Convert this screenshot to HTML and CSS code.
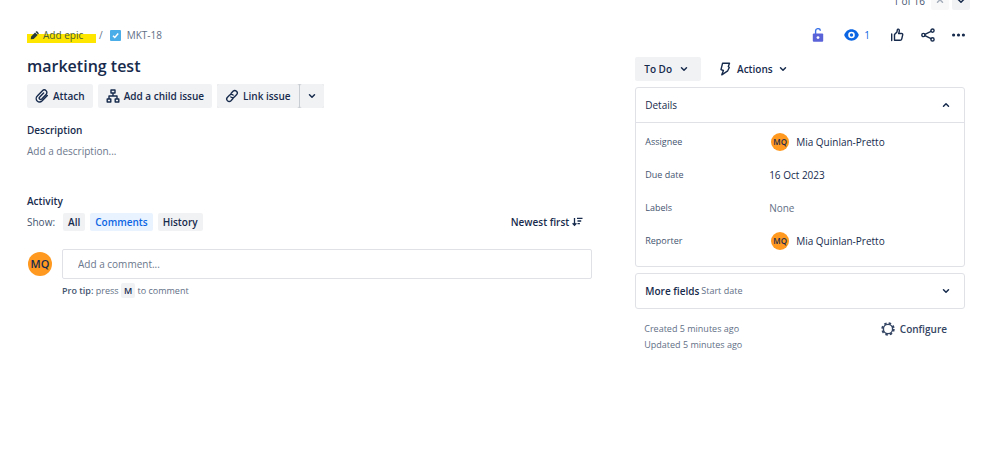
FILE: index.html
```html
<!DOCTYPE html>
<html lang="en">
<head>
    <meta charset="utf-8">
    <title>MKT-18 marketing test</title>
    <link rel="stylesheet" href="styles.css">
</head>
<body>

    <!-- Pager -->
    <nav class="pager" aria-label="Issues">
        <span class="pager-count">1 of 16</span>
        <button class="pager-btn" aria-label="Previous issue" disabled>
            <svg class="chevron" viewBox="0 0 8 8"><path d="M1.5 5.2 4 2.8l2.5 2.4"/></svg>
        </button>
        <button class="pager-btn" aria-label="Next issue">
            <svg class="chevron" viewBox="0 0 8 8"><path d="M1.5 2.8 4 5.2l2.5-2.4"/></svg>
        </button>
    </nav>

    <div class="issue">
        <!-- Left column -->
        <main class="main">
            <div class="breadcrumbs">
                <a href="#epic" class="add-epic">
                    <svg class="pencil" viewBox="0 0 10 10"><path d="M.800 9.300l.5-3.300L5.600 1.600 8.500 4.400 4.100 8.800z M6.200 1l.7-.6q.5-.4 1 0l1.700 1.700q.4.500 0 1l-.6.700z"/></svg>
                    Add epic
                </a>
                <span class="slash">/</span>
                <a href="#MKT-18" class="issue-key">
                    <svg class="task-icon" viewBox="0 0 11 11"><rect width="11" height="11" rx="1" fill="#4bade8"/><path d="M3 5.7l1.8 1.8L8.2 3.6" fill="none" stroke="#fff" stroke-width="1.5"/></svg>
                    MKT-18
                </a>
            </div>

            <h1>marketing test</h1>

            <div class="toolbar">
                <button class="btn">
                    <svg class="icon" viewBox="0 0 14 14"><path d="M12.300 6.400 7.200 11.800c-1.400 1.400-3.600 1.500-5 .2-1.300-1.300-1.300-3.500.1-4.900l4.900-5.200c1.100-1.100 2.900-1.200 3.900-.2 1.100 1 1 2.700 0 3.700L6.700 10c-.6.600-1.500.7-2.100.1s-.5-1.400.1-2L8.600 4"/></svg>
                    Attach
                </button>
                <button class="btn">
                    <svg class="icon" viewBox="0 0 14 14"><path d="M5 1h4v3H5zM1.200 10h3.600v3H1.200zM9.200 10h3.600v3H9.200zM7 4v3M3 10V7h8v3"/></svg>
                    Add a child issue
                </button>
                <div class="split">
                    <button class="btn">
                        <svg class="icon" viewBox="0 0 14 14"><path d="M6 4.4 8 2.3c1-1 2.500-1 3.500-.1 1 1 1 2.500 0 3.500L9.300 7.900c-1 1-2.600 1-3.500 0M8 9.600l-2 2.100c-1 1-2.500 1-3.500.1-1-1-1-2.500 0-3.500L4.700 6.100c1-1 2.600-1 3.500 0"/></svg>
                        Link issue
                    </button>
                    <button class="btn" aria-label="More link options">
                        <svg class="chevron" viewBox="0 0 8 8"><path d="M1.5 2.8 4 5.2l2.5-2.4"/></svg>
                    </button>
                </div>
            </div>

            <section class="description">
                <h2>Description</h2>
                <p>Add a description...</p>
            </section>

            <!-- Activity -->
            <section class="activity">
                <h2>Activity</h2>
                <div class="filters">
                    <span class="show">Show:</span>
                    <button class="chip">All</button>
                    <button class="chip chip-active">Comments</button>
                    <button class="chip">History</button>
                    <button class="sort">
                        Newest first
                        <svg class="sort-icon" viewBox="0 0 11 10"><path d="M2.5 1v7M.6 6.2l1.9 2 1.9-2M5 1.3h5.5M5.500 4h3.700M5.500 6.600h2.400"/></svg>
                    </button>
                </div>
                <div class="comment">
                    <span class="avatar avatar-large">MQ</span>
                    <div class="comment-body">
                        <input type="text" class="comment-input" placeholder="Add a comment..." aria-label="Add a comment">
                        <div class="tip"><b>Pro tip:</b> press <kbd>M</kbd> to comment</div>
                    </div>
                </div>
            </section>
        </main>

        <!-- Right column -->
        <aside class="side">
            <div class="actions">
                <button aria-label="Restrictions">
                    <svg width="12" height="14" viewBox="0 0 12 14"><path d="M3.600 6V3.300a2.400 2.400 0 0 1 4.800-.5" fill="none" stroke="#3b73e8" stroke-width="1.4"/><rect x=".8" y="5.600" width="10.400" height="8.200" rx="1" fill="#5b63d9"/><circle cx="6" cy="9.600" r="1.400" fill="#fff"/></svg>
                </button>
                <button class="watch" aria-label="1 watcher">
                    <svg width="15" height="12" viewBox="0 0 15 12"><path d="M7.500.3C4 .3 1.300 2.600.2 6c1.100 3.400 3.800 5.700 7.300 5.700s6.200-2.300 7.300-5.700C13.700 2.600 11 .3 7.500.3z" fill="#0c66e4"/><circle cx="7.500" cy="6" r="2.500" fill="none" stroke="#fff" stroke-width="1.600"/></svg>
                    1
                </button>
                <button aria-label="Like">
                    <svg class="icon" viewBox="0 0 14 14"><path d="M1.700 6v6.500M4.500 12.300V6.600L7 4l.3-2.200c.2-1 1.900-.9 2 .5.1 1.200-.3 2.400-.7 3.200h3c.9 0 1.300.6 1.100 1.400l-1 4.200c-.2.800-.7 1.200-1.500 1.200z"/></svg>
                </button>
                <button aria-label="Share">
                    <svg class="icon" viewBox="0 0 14 14"><circle cx="2.400" cy="7" r="1.600"/><circle cx="11.500" cy="2.600" r="1.600"/><circle cx="11.500" cy="11.400" r="1.600"/><path d="M3.900 6.300 10 3.300M3.900 7.700l6.100 3"/></svg>
                </button>
                <button aria-label="More actions">
                    <svg width="13" height="4" viewBox="0 0 13 4" fill="#172b4d"><circle cx="1.600" cy="2" r="1.600"/><circle cx="6.500" cy="2" r="1.600"/><circle cx="11.400" cy="2" r="1.600"/></svg>
                </button>
            </div>

            <div class="status">
                <button class="btn btn-status">
                    To Do
                    <svg class="chevron" viewBox="0 0 8 8"><path d="M1.5 2.8 4 5.2l2.5-2.4"/></svg>
                </button>
                <button class="btn btn-plain">
                    <svg class="bolt" viewBox="0 0 12 14"><path d="M3.600 1.200h6.900L9.300 4.600l1 .9-1.600 3.300-5.900 4 1.600-4.300-2.400-.9z"/></svg>
                    Actions
                    <svg class="chevron" viewBox="0 0 8 8"><path d="M1.5 2.8 4 5.2l2.5-2.4"/></svg>
                </button>
            </div>

            <section class="card">
                <button class="card-head">
                    Details
                    <svg class="chevron" viewBox="0 0 8 8"><path d="M1.5 5.2 4 2.8l2.5 2.4"/></svg>
                </button>
                <dl class="fields">
                    <dt>Assignee</dt>
                    <dd><span class="avatar">MQ</span>Mia Quinlan-Pretto</dd>
                    <dt>Due date</dt>
                    <dd>16 Oct 2023</dd>
                    <dt>Labels</dt>
                    <dd class="empty">None</dd>
                    <dt>Reporter</dt>
                    <dd><span class="avatar">MQ</span>Mia Quinlan-Pretto</dd>
                </dl>
            </section>

            <section class="card">
                <button class="card-head">
                    <b>More fields</b>
                    <small>Start date</small>
                    <svg class="chevron" viewBox="0 0 8 8"><path d="M1.5 2.8 4 5.2l2.5-2.4"/></svg>
                </button>
            </section>

            <footer class="meta">
                <div>
                    <p>Created 5 minutes ago</p>
                    <p>Updated 5 minutes ago</p>
                </div>
                <button class="configure">
                    <svg class="icon" viewBox="0 0 14 14"><circle cx="7" cy="7" r="4.600"/><circle class="cog" cx="7" cy="7" r="5.700"/></svg>
                    Configure
                </button>
            </footer>
        </aside>
    </div>

</body>
</html>
```
FILE: styles.css
```css
* {
    box-sizing: border-box;
}

body {
    display: flow-root;
    margin: 0;
    background: #fff;
    color: #172b4d;
    font-family: "Open Sans", "Noto Sans", sans-serif;
    font-size: 10px;
    line-height: 16px;
}

h1, h2, p, dl, dd {
    margin: 0;
}

button {
    display: flex;
    align-items: center;
    padding: 0;
    border: 0;
    background: none;
    color: inherit;
    font: inherit;
    white-space: nowrap;
    cursor: pointer;
}

a {
    color: inherit;
    text-decoration: none;
}

svg {
    flex: none;
}

/* Icons */
.icon {
    width: 14px;
    height: 14px;
    fill: none;
    stroke: #172b4d;
    stroke-width: 1.4;
    stroke-linejoin: round;
    stroke-linecap: round;
}

.chevron {
    width: 8px;
    height: 8px;
    fill: none;
    stroke: currentColor;
    stroke-width: 1.5;
    stroke-linejoin: round;
    stroke-linecap: round;
}

/* Pager */
.pager {
    display: flex;
    justify-content: flex-end;
    align-items: center;
    gap: 3px;
    margin-top: -8px;
    padding-right: 28px;
    color: #44546f;
}

.pager-count {
    margin-right: 3px;
}

.pager-btn {
    justify-content: center;
    width: 18px;
    height: 18px;
    border-radius: 2px;
    background: #f1f2f4;
    color: #172b4d;
}

.pager-btn:disabled {
    background: #f8f8f9;
    color: #a5adba;
}

/* Layout */
.issue {
    display: grid;
    grid-template-columns: 12fr 7fr;
    gap: 43px;
    padding: 17px 33px 24px 27px;
}

/* Breadcrumbs */
.breadcrumbs {
    display: flex;
    align-items: center;
    height: 16px;
    color: #626f86;
}

.add-epic {
    display: flex;
    align-items: center;
    gap: 4px;
    width: 69px;
    padding-left: 3px;
    background: linear-gradient(#fff 7px, #ffe600 7px);
    color: #4c6036;
}

.pencil {
    width: 9px;
    height: 9px;
    fill: #253a3c;
}

.slash {
    padding: 0 7px 0 3px;
}

.issue-key {
    display: flex;
    align-items: center;
    gap: 6px;
}

.task-icon {
    width: 11px;
    height: 11px;
}

h1 {
    margin-top: 11px;
    font-size: 16px;
    font-weight: 600;
    line-height: 24px;
}

/* Buttons */
.toolbar {
    display: flex;
    gap: 5px;
    margin-top: 6px;
}

.btn {
    gap: 4px;
    height: 24px;
    padding: 0 8px;
    border-radius: 2px;
    background: #f1f2f4;
    font-weight: 600;
}

.split {
    display: flex;
    gap: 1px;
    border-radius: 2px;
    background: #c8ccd3;
}

h2 {
    font-size: 10px;
    font-weight: 600;
    line-height: 16px;
}

.description {
    margin-top: 14px;
}

.description p {
    margin-top: 5px;
    color: #6b778c;
}

/* Activity */
.activity {
    margin-top: 34px;
}

.filters {
    display: flex;
    align-items: center;
    gap: 5px;
    margin-top: 4px;
}

.show {
    margin-right: 3px;
    color: #44546f;
}

.chip {
    height: 18px;
    padding: 0 5px;
    border-radius: 2px;
    background: #f1f2f4;
    font-weight: 600;
}

.chip-active {
    background: #e9f2ff;
    color: #0c66e4;
}

.sort {
    gap: 3px;
    margin-left: auto;
    margin-right: 9px;
    font-weight: 600;
}

.sort-icon {
    width: 11px;
    height: 10px;
    fill: none;
    stroke: #172b4d;
    stroke-width: 1.3;
}

.comment {
    display: flex;
    gap: 10px;
    margin-top: 18px;
}

.comment-body {
    flex: 1;
}

.comment-input {
    display: block;
    width: 100%;
    height: 30px;
    padding: 0 15px;
    border: 1px solid #dfe1e6;
    border-radius: 2px;
    color: #172b4d;
    font: inherit;
}

.comment-input::placeholder {
    color: #6b778c;
    opacity: 1;
}

.tip {
    margin-top: 4px;
    color: #626f86;
    font-size: 9px;
}

.tip b {
    color: #44546f;
    font-weight: 600;
}

kbd {
    padding: 1px 3px;
    border-radius: 2px;
    background: #f1f2f4;
    color: #172b4d;
    font-family: inherit;
    font-size: 9px;
    font-weight: 600;
}

/* Avatars */
.avatar {
    display: inline-flex;
    justify-content: center;
    align-items: center;
    flex: none;
    width: 18px;
    height: 18px;
    margin: 0 7px 0 2px;
    border-radius: 50%;
    background: #ff991f;
    color: #172b4d;
    font-size: 8px;
    font-weight: 600;
}

.avatar-large {
    width: 24px;
    height: 24px;
    margin: 3px 0 0 1px;
    font-size: 11px;
}

/* Right column */
.actions {
    display: flex;
    justify-content: flex-end;
    align-items: center;
    gap: 17px;
    height: 16px;
}

.watch {
    gap: 5px;
    margin: 0 3px;
    color: #0c66e4;
}

.status {
    display: flex;
    gap: 12px;
    margin-top: 14px;
}

.btn-status {
    gap: 8px;
    padding: 0 13px 0 9px;
}

.btn-plain {
    gap: 6px;
    padding: 0 6px;
    background: none;
}

.bolt {
    width: 12px;
    height: 14px;
    fill: none;
    stroke: #172b4d;
    stroke-width: 1.4;
    stroke-linejoin: round;
}

.card {
    margin-top: 6px;
    border: 1px solid #dfe1e6;
    border-radius: 3px;
}

.card-head {
    width: 100%;
    height: 34px;
    padding: 0 14px 0 9px;
}

.card-head b {
    font-weight: 600;
}

.card-head small {
    margin-left: 2px;
    color: #626f86;
    font-size: 9px;
}

.card-head .chevron {
    margin-left: auto;
}

.fields {
    display: grid;
    grid-template-columns: 2fr 3fr;
    grid-auto-rows: 33px;
    align-items: center;
    padding: 2px 9px 9px;
    border-top: 1px solid #dfe1e6;
}

.fields dt {
    color: #44546f;
    font-size: 9px;
}

.fields dd {
    display: flex;
    align-items: center;
}

.fields .empty {
    color: #626f86;
}

.meta {
    display: flex;
    justify-content: space-between;
    align-items: flex-start;
    margin-top: 12px;
    padding: 0 18px 0 9px;
    color: #626f86;
    font-size: 9px;
}

.configure {
    gap: 5px;
    color: #344563;
    font-size: 10px;
    font-weight: 600;
}

.configure .icon {
    stroke: #344563;
}

.configure .cog {
    stroke-width: 2;
    stroke-dasharray: 2.4 2.077;
    stroke-linecap: butt;
}
```
